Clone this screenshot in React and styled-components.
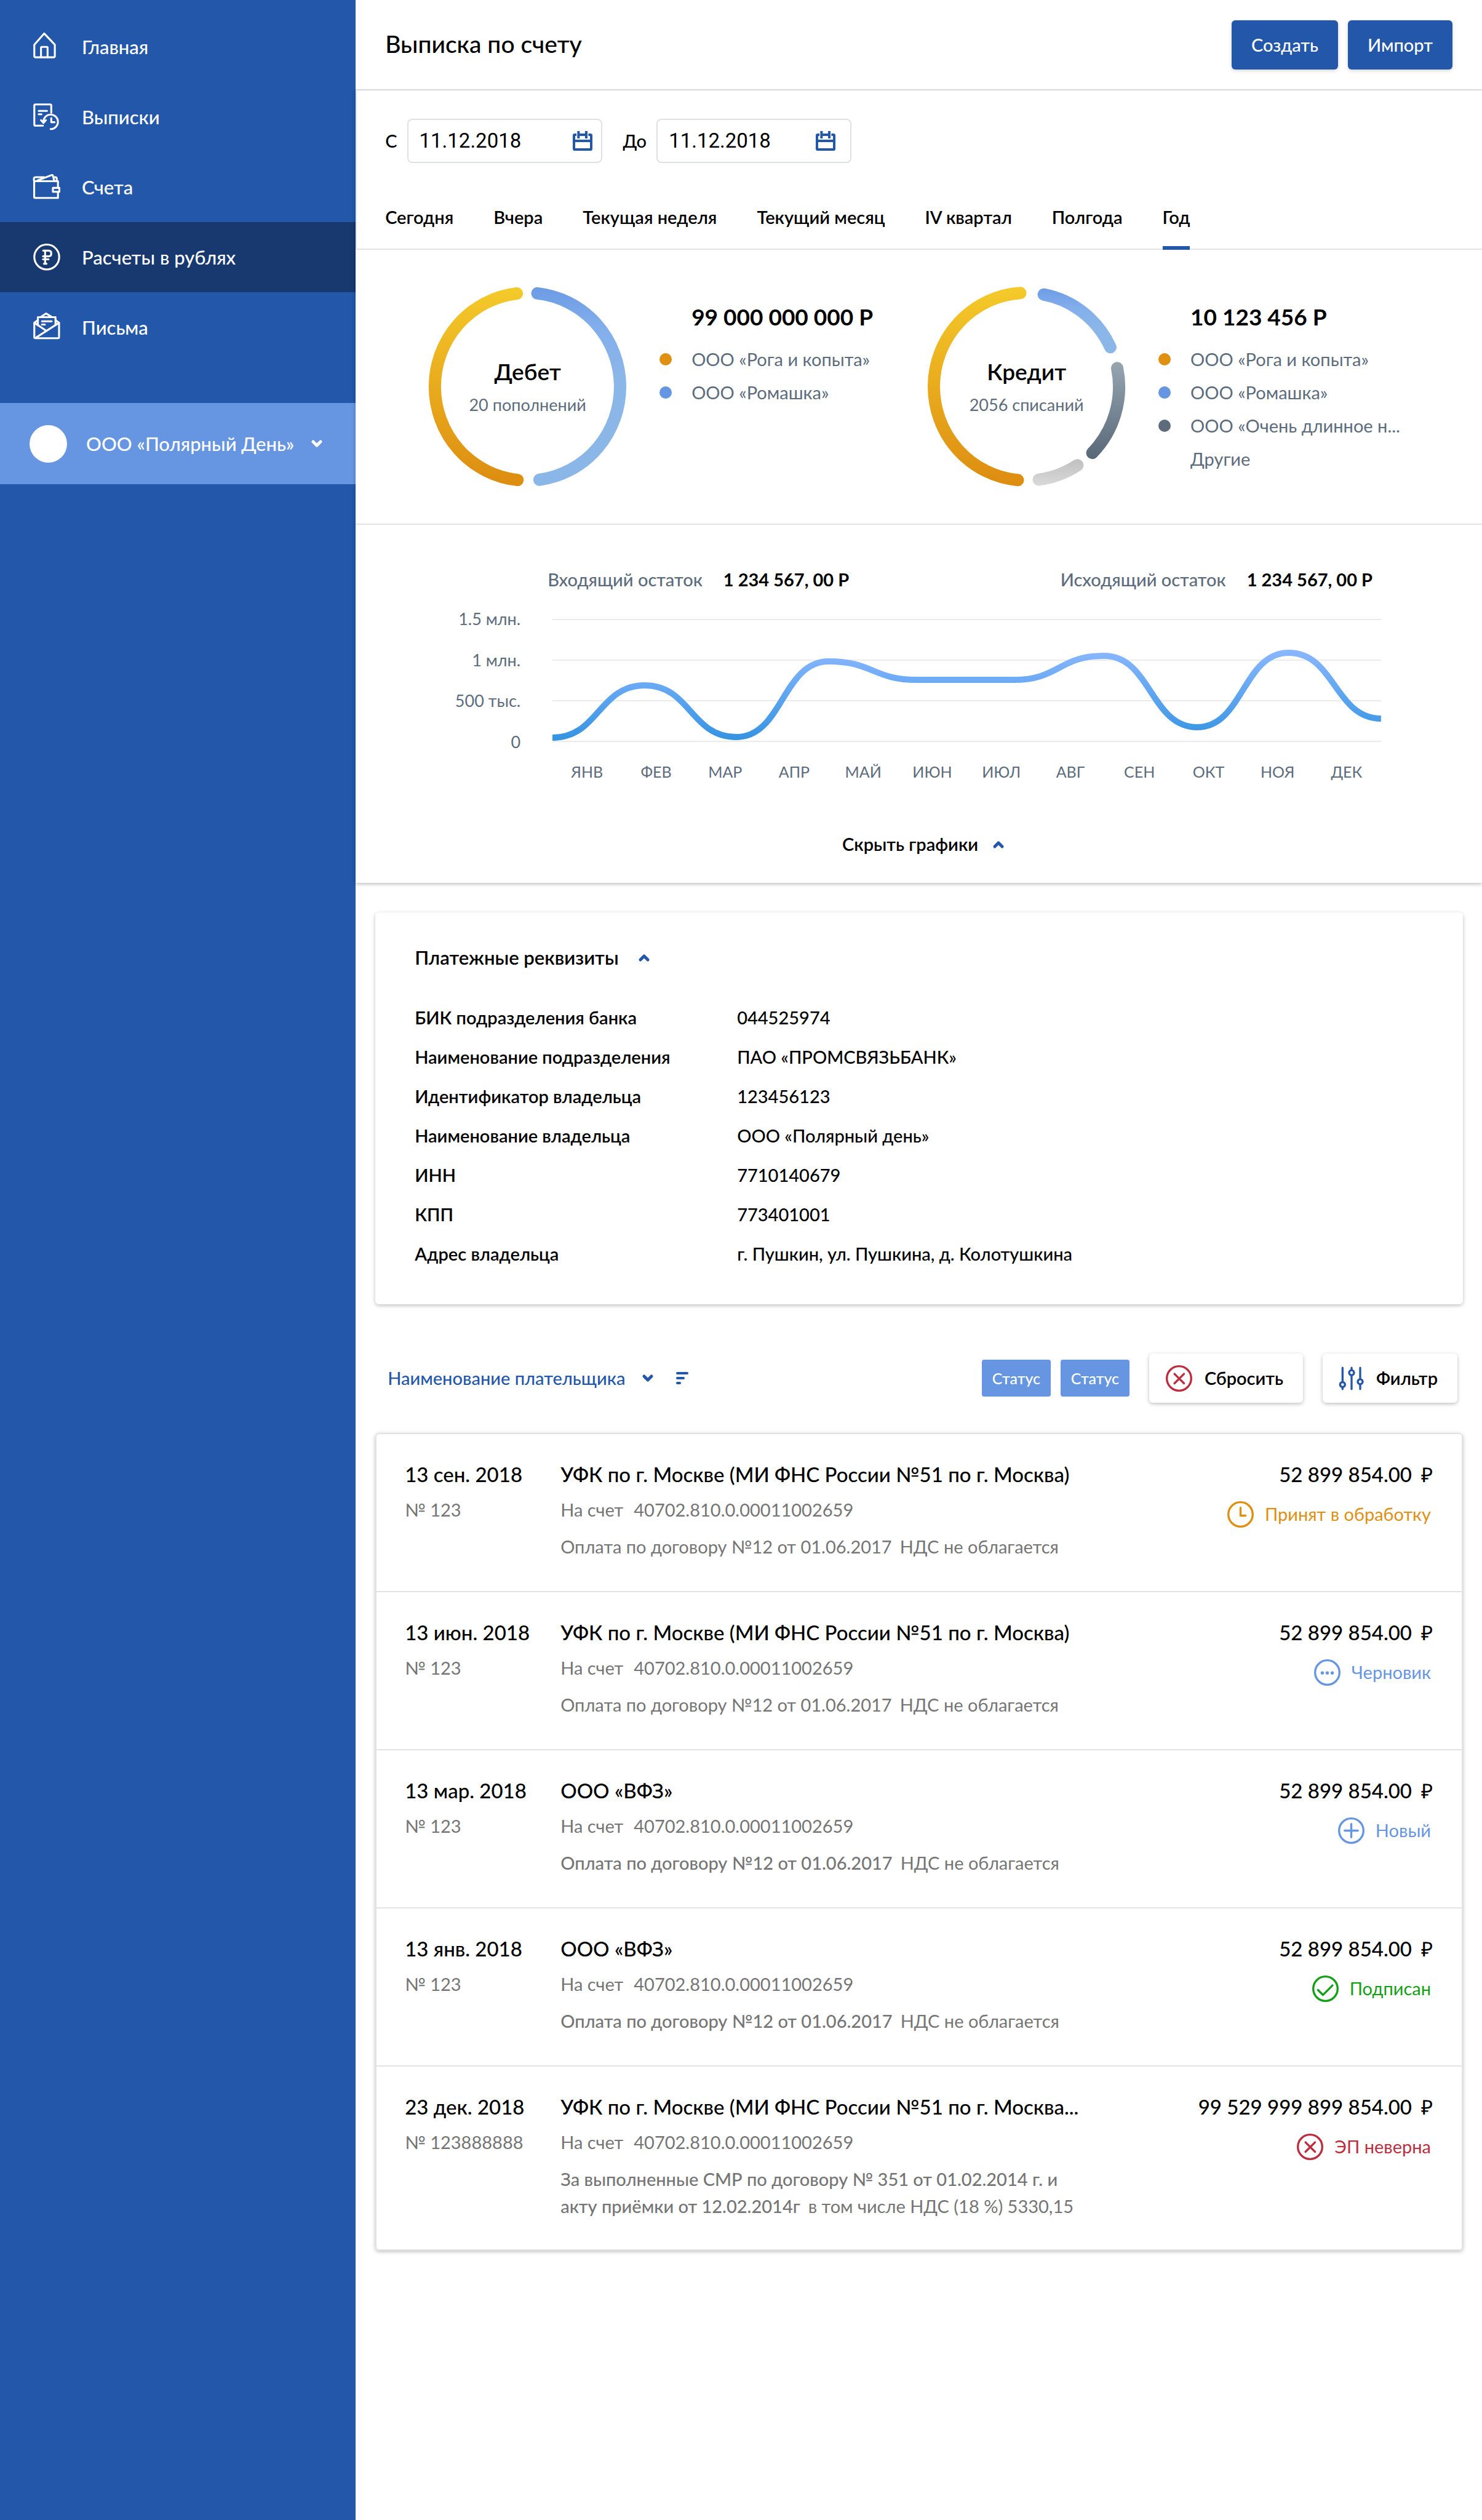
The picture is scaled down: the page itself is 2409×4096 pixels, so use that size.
import React from "react";
import styled, { createGlobalStyle, css } from "styled-components";

const color = {
  blue: "#2357aa",
  navy: "#173970",
  sky: "#6695e2",
  slate: "#5c6c7c",
  grey: "#757575",
  line: "#e3e3e3",
  orange: "#df8f11",
  green: "#14a014",
  red: "#bc2e3e",
};

const shadow = "0 2px 6px rgba(0, 0, 0, 0.26)";

const GlobalStyle = createGlobalStyle`
  *, *::before, *::after { box-sizing: border-box; }
  body {
    margin: 0;
    background: #fff;
    color: #000;
    font-family: Lato, "Open Sans", sans-serif;
    font-size: 29px;
    line-height: 36px;
    font-weight: 500;
  }
  button, input, select { font: inherit; color: inherit; }
  button { cursor: pointer; }
  h1, h2, h3, p, ul, dl, dd, dt { margin: 0; padding: 0; font: inherit; }
  ul { list-style: none; }
`;

/* ---------- icons ---------- */

const Svg = styled.svg`
  display: block;
  flex: none;
  overflow: visible;
  fill: none;
  stroke: currentColor;
  stroke-linecap: round;
  stroke-linejoin: round;
`;

const NavIcon = ({ children }) => (
  <Svg width="44" height="44" viewBox="0 0 198 198" strokeWidth="14" aria-hidden="true">
    {children}
  </Svg>
);

const HomeIcon = () => (
  <NavIcon>
    <path d="M80 2 8 84v84q0 8 8 8h134q8 0 8-8V84z" />
    <path d="M57 176v-70q0-6 6-6h36q6 0 6 6v70" />
  </NavIcon>
);

const StatementIcon = () => (
  <NavIcon>
    <path d="M132 68V16q0-8-8-8H16q-8 0-8 8v139q0 8 8 8h55M40 55h61M40 80h20" />
    <path d="M75 140a53 53 0 1 1 52 48M57 123l18 20 18-20M132 108v30h24" />
  </NavIcon>
);

const WalletIcon = () => (
  <NavIcon>
    <path d="M181 98V56H7v115q0 8 8 8h166v-38M144 105h47v29h-47z" />
    <path d="M5 50V38q0-11 13-11h62M30 52 134 12q8-3 10 4l10 38M155 27h6q11 0 11 11v16" />
  </NavIcon>
);

const RubleIcon = () => (
  <NavIcon>
    <circle cx="99" cy="98" r="91" />
    <path d="M73 51h39q20 0 20 21t-20 21H72M72 115h40M87 51v96M79 147h18" />
  </NavIcon>
);

const MailIcon = () => (
  <NavIcon>
    <path d="M8 66v105q0 8 8 8h165q8 0 8-8V66M34 82V25h129v57M60 20 94-2l36 22" />
    <path d="M34 46 8 66l90 60M163 46l26 20L16 177M64 55h71M64 79h21" />
  </NavIcon>
);

const Chevron = ({ up }) => (
  <Svg width="18" height="11" viewBox="0 0 18 11" strokeWidth="5" aria-hidden="true">
    <path d={up ? "M3 9l6-6 6 6" : "M3 2l6 6 6-6"} />
  </Svg>
);

const CalendarIcon = () => (
  <Svg width="32" height="32" viewBox="0 0 48 48" strokeWidth="6" aria-hidden="true">
    <rect x="3" y="9" width="42" height="36" rx="2" />
    <path d="M3 24h42" strokeLinecap="butt" />
    <path d="M14 0v18M33 0v18" stroke="#fff" strokeWidth="10" strokeLinecap="butt" />
    <path d="M14 0v18M33 0v18M14 9h19" strokeLinecap="butt" />
  </Svg>
);

const SortIcon = () => (
  <Svg width="20" height="20" viewBox="0 0 20 20" strokeWidth="4" aria-hidden="true">
    <path d="M2 2h16M2 10h10M2 18h4" />
  </Svg>
);

const SlidersIcon = () => (
  <Svg width="40" height="39" viewBox="0 0 60 58" strokeWidth="5" aria-hidden="true">
    <path d="M8 3v34M8 52v3M30 3v5M30 23v32M51 3v26M51 45v10" />
    <circle cx="8" cy="44" r="6" />
    <circle cx="30" cy="15" r="6" />
    <circle cx="51" cy="37" r="6" />
  </Svg>
);

const glyphs = {
  clock: <path d="M32 16v19h12" />,
  dots: (
    <g fill="currentColor" stroke="none">
      <circle cx="20" cy="33" r="4" />
      <circle cx="32" cy="33" r="4" />
      <circle cx="44" cy="33" r="4" />
    </g>
  ),
  plus: <path d="M32 16v32M16 32h32" />,
  check: <path d="M14 35l12 12 23-23" />,
  cross: <path d="M21 21l23 23M44 21L21 44" />,
};

const RoundIcon = ({ glyph }) => (
  <Svg width="43" height="43" viewBox="0 0 64 64" strokeWidth="5" aria-hidden="true">
    <circle cx="32" cy="32" r="29.5" />
    {glyphs[glyph]}
  </Svg>
);

/* ---------- shell ---------- */

const Shell = styled.div`
  display: flex;
  min-height: 100vh;
`;

const Sidebar = styled.aside`
  flex: none;
  width: 24%;
  padding-top: 19px;
  background: ${color.blue};
  color: #fff;
  font-size: 31px;
`;

const NavLink = styled.a`
  display: flex;
  align-items: center;
  gap: 35px;
  height: 114px;
  padding: 0 54px;
  color: inherit;
  text-decoration: none;
  background: ${(p) => (p.$active ? color.navy : "transparent")};
`;

const Account = styled.button`
  display: flex;
  align-items: center;
  width: 100%;
  height: 132px;
  margin-top: 66px;
  padding: 0 48px;
  border: 0;
  background: ${color.sky};
`;

const Avatar = styled.span`
  width: 61px;
  height: 61px;
  margin-right: 31px;
  border-radius: 50%;
  background: #fff;
`;

const AccountName = styled.span`
  margin-right: 28px;
`;

const Main = styled.main`
  flex: 1;
  min-width: 0;
`;

const Header = styled.header`
  display: flex;
  align-items: center;
  justify-content: space-between;
  height: 147px;
  padding: 0 48px;
  border-bottom: 2px solid ${color.line};
`;

const Title = styled.h1`
  padding-bottom: 4px;
  font-size: 39px;
  line-height: 48px;
`;

const Actions = styled.div`
  display: flex;
  gap: 16px;
`;

const PrimaryButton = styled.button`
  height: 80px;
  padding: 0 32px;
  border: 0;
  border-radius: 6px;
  background: ${color.blue};
  color: #fff;
  box-shadow: 0 2px 6px rgba(0, 0, 0, 0.16);
`;

/* ---------- overview panel ---------- */

const Overview = styled.section`
  box-shadow: ${shadow};
`;

const Filters = styled.div`
  padding: 46px 46px 0;
  border-left: 2px solid ${color.line};
  border-bottom: 2px solid ${color.line};
`;

const Dates = styled.div`
  display: flex;
  align-items: center;
  gap: 34px;
`;

const DateField = styled.label`
  display: flex;
  align-items: center;
  gap: 16px;
`;

const DateBox = styled.span`
  display: flex;
  align-items: center;
  width: 317px;
  height: 72px;
  padding: 0 ${(p) => p.$inset}px 0 18px;
  border: 2px solid #dfe2e5;
  border-radius: 8px;
  color: ${color.blue};
`;

const DateInput = styled.input`
  flex: 1;
  min-width: 0;
  padding: 0;
  border: 0;
  outline: 0;
  background: none;
  color: #000;
  font: 400 33px/40px Roboto, sans-serif;
`;

const Tabs = styled.div`
  display: flex;
  gap: 65px;
  margin: 70px 0 -2px;
`;

const Tab = styled.button`
  padding: 0 0 29px;
  border: 0;
  border-bottom: 6px solid ${(p) => (p.$active ? color.blue : "transparent")};
  background: none;
  font-weight: 600;
`;

const Shares = styled.div`
  display: grid;
  grid-template-columns: 1fr 1fr;
  padding: 60px 90px 60px 119px;
  border-bottom: 2px solid ${color.line};
`;

const Share = styled.div`
  display: flex;
`;

const Donut = styled.div`
  display: grid;
  flex: none;
  width: 321px;
  height: 325px;
  margin-right: 54px;
  > * { grid-area: 1 / 1; }
`;

const DonutText = styled.div`
  align-self: center;
  text-align: center;
`;

const DonutName = styled.h2`
  font-size: 37px;
  line-height: 44px;
  font-weight: 600;
`;

const DonutCount = styled.p`
  margin-top: 14px;
  font-size: 27px;
  font-weight: 400;
  color: ${color.slate};
`;

const Legend = styled.div`
  padding-top: 27px;
`;

const Total = styled.p`
  margin: 0 0 29px 52px;
  font-size: 37px;
  line-height: 44px;
  font-weight: 700;
`;

const LegendList = styled.ul`
  display: grid;
  gap: 18px;
  font-weight: 400;
  color: ${color.slate};
`;

const LegendItem = styled.li`
  display: flex;
  align-items: center;
  gap: 32px;
  white-space: nowrap;
  &::before {
    content: "";
    width: 20px;
    height: 20px;
    border-radius: 50%;
    background: ${(p) => p.$dot || "transparent"};
  }
`;

const ChartBlock = styled.div`
  display: grid;
  grid-template-columns: 148px 1fr;
  column-gap: 52px;
  padding: 71px 164px 45px 120px;
`;

const Balances = styled.div`
  grid-column: 2;
  display: flex;
  justify-content: space-between;
  margin: 0 14px 46px -8px;
`;

const Balance = styled.p`
  display: flex;
  gap: 34px;
  color: ${color.slate};
  strong { color: #000; font-weight: 700; }
`;

const Scale = styled.ul`
  display: flex;
  flex-direction: column;
  justify-content: space-between;
  margin: -17px 0;
  text-align: right;
  font-size: 27px;
  line-height: 34px;
  font-weight: 400;
  color: ${color.slate};
`;

const Plot = styled.div`
  height: 200px;
  background: repeating-linear-gradient(#ebebeb 0 2px, transparent 2px 66px);
`;

const Months = styled.ul`
  grid-column: 2;
  display: grid;
  grid-template-columns: repeat(12, 1fr);
  margin-top: 32px;
  text-align: center;
  font-size: 25px;
  line-height: 32px;
  font-weight: 400;
  color: ${color.slate};
`;

const HideCharts = styled.button`
  grid-column: 1 / -1;
  display: flex;
  align-items: center;
  justify-self: center;
  gap: 24px;
  margin: 84px 0 0 58px;
  padding: 0;
  border: 0;
  background: none;
  font-weight: 600;
  svg { color: ${color.blue}; }
`;

/* ---------- requisites ---------- */

const Card = styled.section`
  margin: 48px 31px 80px 32px;
  padding: 53px 64px 64px;
  border-radius: 6px;
  box-shadow: ${shadow};
`;

const CardToggle = styled.button`
  display: flex;
  align-items: center;
  gap: 32px;
  margin-bottom: 60px;
  padding: 0;
  border: 0;
  background: none;
  font-size: 31px;
  line-height: 40px;
  font-weight: 600;
  svg { color: ${color.blue}; }
`;

const Requisites = styled.dl`
  display: grid;
  grid-template-columns: 524px 1fr;
  row-gap: 28px;
  dt { font-weight: 600; }
`;

/* ---------- toolbar ---------- */

const Toolbar = styled.div`
  display: flex;
  align-items: center;
  gap: 32px;
  margin-bottom: 49px;
  padding: 0 40px 0 52px;
`;

const Sorting = styled.div`
  display: flex;
  align-items: center;
  gap: 37px;
  margin-right: auto;
  color: ${color.blue};
`;

const PayerSelect = styled.select`
  margin-right: -10px;
  padding: 0;
  border: 0;
  background: none;
  appearance: none;
`;

const Chips = styled.div`
  display: flex;
  gap: 16px;
`;

const Chip = styled.button`
  height: 60px;
  width: 112px;
  padding: 0;
  border: 0;
  border-radius: 4px;
  background: ${color.sky};
  color: #fff;
  font-size: 25px;
`;

const ToolButton = styled.button`
  display: flex;
  align-items: center;
  gap: 20px;
  height: 80px;
  padding: 0 32px 0 27px;
  border: 0;
  border-radius: 6px;
  background: #fff;
  box-shadow: ${shadow};
  font-weight: 600;
  svg { color: ${(p) => p.$tint}; }
`;

/* ---------- operations ---------- */

const Operations = styled.ul`
  margin: 0 31px 48px 32px;
  border: 2px solid ${color.line};
  border-radius: 6px;
  box-shadow: ${shadow};
`;

const Operation = styled.li`
  display: grid;
  grid-template-columns: 253px 1fr auto;
  padding: 45px 47px 50px 46px;
  font-weight: 400;
  color: ${color.grey};
  & + & { border-top: 2px solid ${color.line}; }
  &:last-child { padding-bottom: 48px; }
`;

const headline = css`
  margin-bottom: 20px;
  font-size: 33px;
  line-height: 40px;
  font-weight: 500;
  color: #000;
`;

const Day = styled.h3`
  ${headline}
`;

const Payer = styled.h3`
  ${headline}
`;

const AccountLine = styled.p`
  display: flex;
  gap: 17px;
  margin-bottom: 20px;
`;

const PurposeLine = styled.p`
  display: flex;
  gap: 13px;
  line-height: 44px;
  font-weight: ${(p) => (p.$strong ? 500 : 400)};
`;

const Vat = styled.span`
  font-weight: 400;
`;

const Sum = styled.p`
  ${headline}
  display: flex;
  justify-content: flex-end;
  gap: 15px;
  margin-bottom: 23px;
  span { font-weight: 400; }
`;

const Status = styled.p`
  display: flex;
  align-items: center;
  justify-content: flex-end;
  gap: 18px;
  height: 44px;
  padding-right: 3px;
  color: ${(p) => p.$tone};
`;

/* ---------- data ---------- */

const nav = [
  ["Главная", HomeIcon],
  ["Выписки", StatementIcon],
  ["Счета", WalletIcon],
  ["Расчеты в рублях", RubleIcon],
  ["Письма", MailIcon],
];

const periods = ["Сегодня", "Вчера", "Текущая неделя", "Текущий месяц", "IV квартал", "Полгода", "Год"];

const shares = [
  {
    name: "Дебет",
    count: "20 пополнений",
    total: "99 000 000 000 Р",
    arcs: [
      ["gold", "M214 16.5A225 228 0 0 0 215.7 469.7"],
      ["azure", "M264 16.3A225 228 0 0 1 269 469.1"],
    ],
    legend: [
      ["ООО «Рога и копыта»", color.orange],
      ["ООО «Ромашка»", color.sky],
    ],
  },
  {
    name: "Кредит",
    count: "2056 списаний",
    total: "10 123 456 Р",
    arcs: [
      ["gold", "M225 15.5A225 228 0 0 0 219 470"],
      ["azureShort", "M282 19A225 228 0 0 1 444 147"],
      ["steel", "M460.6 198A225 228 0 0 1 400 404"],
      ["silver", "M364 434A225 228 0 0 1 270 469"],
    ],
    legend: [
      ["ООО «Рога и копыта»", color.orange],
      ["ООО «Ромашка»", color.sky],
      ["ООО «Очень длинное н...", color.slate],
      ["Другие", null],
    ],
  },
];

const gradients = [
  ["gold", 0, 486, [["0", "#f4ca2a"], ["1", "#dd8c10"]]],
  ["azure", 0, 486, [["0", "#6c9be4"], ["0.2", "#82aeec"], ["0.45", "#8bb6e8"]]],
  ["azureShort", 0, 170, [["0", "#6c9be4"], ["0.3", "#82aeec"], ["0.6", "#8bb6e8"]]],
  ["steel", 180, 420, [["0", "#98a6b2"], ["1", "#586878"]]],
  ["silver", 425, 486, [["0", "#c2c2c2"], ["1", "#dadada"]]],
];

const months = ["ЯНВ", "ФЕВ", "МАР", "АПР", "МАЙ", "ИЮН", "ИЮЛ", "АВГ", "СЕН", "ОКТ", "НОЯ", "ДЕК"];

const balancePoints = [
  [0, 193], [150, 108], [299, 192], [449, 69], [593, 99],
  [750, 99], [897, 60], [1048, 176], [1197, 55], [1347, 162],
];

const balancePath = balancePoints
  .map(([x, y], i) => {
    if (i === 0) return `M${x} ${y}`;
    const [px, py] = balancePoints[i - 1];
    const mid = (px + x) / 2;
    return `C${mid} ${py} ${mid} ${y} ${x} ${y}`;
  })
  .join("");

const requisites = [
  ["БИК подразделения банка", "044525974"],
  ["Наименование подразделения", "ПАО «ПРОМСВЯЗЬБАНК»"],
  ["Идентификатор владельца", "123456123"],
  ["Наименование владельца", "ООО «Полярный день»"],
  ["ИНН", "7710140679"],
  ["КПП", "773401001"],
  ["Адрес владельца", "г. Пушкин, ул. Пушкина, д. Колотушкина"],
];

const contract = ["Оплата по договору №12 от 01.06.2017"];
const operations = [
  { day: "13 сен. 2018", no: "№ 123", payer: "УФК по г. Москве (МИ ФНС России №51 по г. Москва)", purpose: contract, vat: "НДС не облагается", sum: "52 899 854.00", status: "Принят в обработку", glyph: "clock", tone: color.orange },
  { day: "13 июн. 2018", no: "№ 123", payer: "УФК по г. Москве (МИ ФНС России №51 по г. Москва)", purpose: contract, vat: "НДС не облагается", sum: "52 899 854.00", status: "Черновик", glyph: "dots", tone: color.sky },
  { day: "13 мар. 2018", no: "№ 123", payer: "ООО «ВФЗ»", purpose: contract, vat: "НДС не облагается", strong: true, sum: "52 899 854.00", status: "Новый", glyph: "plus", tone: color.sky },
  { day: "13 янв. 2018", no: "№ 123", payer: "ООО «ВФЗ»", purpose: contract, vat: "НДС не облагается", strong: true, sum: "52 899 854.00", status: "Подписан", glyph: "check", tone: color.green },
  { day: "23 дек. 2018", no: "№ 123888888", payer: "УФК по г. Москве (МИ ФНС России №51 по г. Москва...", purpose: ["За выполненные СМР по договору № 351 от 01.02.2014 г. и", "акту приёмки от 12.02.2014г"], vat: "в том числе НДС (18 %) 5330,15", strong: true, sum: "99 529 999 899 854.00", status: "ЭП неверна", glyph: "cross", tone: color.red },
];

/* ---------- page ---------- */

const ShareDonut = ({ share }) => (
  <Donut>
    <Svg width="321" height="325" viewBox="0 0 480 486" strokeWidth="30" aria-hidden="true">
      <defs>
        {gradients.map(([id, y1, y2, stops]) => (
          <linearGradient key={id} id={id} gradientUnits="userSpaceOnUse" x1="0" x2="0" y1={y1} y2={y2}>
            {stops.map(([offset, c]) => <stop key={offset} offset={offset} stopColor={c} />)}
          </linearGradient>
        ))}
      </defs>
      {share.arcs.map(([id, d]) => <path key={id} d={d} stroke={`url(#${id})`} />)}
    </Svg>
    <DonutText>
      <DonutName>{share.name}</DonutName>
      <DonutCount>{share.count}</DonutCount>
    </DonutText>
  </Donut>
);

export default function App() {
  return (
    <Shell>
      <GlobalStyle />
      <Sidebar>
        <nav>
          {nav.map(([label, Icon]) => (
            <NavLink key={label} href="#" $active={label === "Расчеты в рублях"}>
              <Icon />
              {label}
            </NavLink>
          ))}
        </nav>
        <Account type="button">
          <Avatar />
          <AccountName>ООО «Полярный День»</AccountName>
          <Chevron />
        </Account>
      </Sidebar>

      <Main>
        <Header>
          <Title>Выписка по счету</Title>
          <Actions>
            <PrimaryButton type="button">Создать</PrimaryButton>
            <PrimaryButton type="button">Импорт</PrimaryButton>
          </Actions>
        </Header>

        <Overview>
          <Filters>
            <Dates>
              <DateField>
                С
                <DateBox $inset={14}>
                  <DateInput defaultValue="11.12.2018" />
                  <CalendarIcon />
                </DateBox>
              </DateField>
              <DateField>
                До
                <DateBox $inset={24}>
                  <DateInput defaultValue="11.12.2018" />
                  <CalendarIcon />
                </DateBox>
              </DateField>
            </Dates>
            <Tabs role="tablist">
              {periods.map((p) => (
                <Tab key={p} type="button" role="tab" $active={p === "Год"} aria-selected={p === "Год"}>
                  {p}
                </Tab>
              ))}
            </Tabs>
          </Filters>

          <Shares>
            {shares.map((share) => (
              <Share key={share.name}>
                <ShareDonut share={share} />
                <Legend>
                  <Total>{share.total}</Total>
                  <LegendList>
                    {share.legend.map(([label, dot]) => (
                      <LegendItem key={label} $dot={dot}>{label}</LegendItem>
                    ))}
                  </LegendList>
                </Legend>
              </Share>
            ))}
          </Shares>

          <ChartBlock>
            <Balances>
              <Balance>Входящий остаток <strong>1 234 567, 00 Р</strong></Balance>
              <Balance>Исходящий остаток <strong>1 234 567, 00 Р</strong></Balance>
            </Balances>
            <Scale>
              <li>1.5 млн.</li>
              <li>1 млн.</li>
              <li>500 тыс.</li>
              <li>0</li>
            </Scale>
            <Plot>
              <Svg width="100%" height="200" viewBox="0 0 1347 200" preserveAspectRatio="none" aria-hidden="true">
                <defs>
                  <linearGradient id="balance" gradientUnits="userSpaceOnUse" x1="0" x2="0" y1="50" y2="198">
                    <stop offset="0" stopColor="#8ab7ff" />
                    <stop offset="1" stopColor="#3493e1" />
                  </linearGradient>
                </defs>
                <path d={balancePath} stroke="url(#balance)" strokeWidth="10" strokeLinecap="butt" />
              </Svg>
            </Plot>
            <Months>{months.map((m) => <li key={m}>{m}</li>)}</Months>
            <HideCharts type="button">Скрыть графики <Chevron up /></HideCharts>
          </ChartBlock>
        </Overview>

        <Card>
          <CardToggle type="button" aria-expanded="true">Платежные реквизиты <Chevron up /></CardToggle>
          <Requisites>
            {requisites.map(([term, value]) => (
              <React.Fragment key={term}>
                <dt>{term}</dt>
                <dd>{value}</dd>
              </React.Fragment>
            ))}
          </Requisites>
        </Card>

        <Toolbar>
          <Sorting>
            <PayerSelect aria-label="Сортировка">
              <option>Наименование плательщика</option>
            </PayerSelect>
            <Chevron />
            <SortIcon />
          </Sorting>
          <Chips>
            <Chip type="button">Статус</Chip>
            <Chip type="button">Статус</Chip>
          </Chips>
          <ToolButton type="button" $tint={color.red}><RoundIcon glyph="cross" />Сбросить</ToolButton>
          <ToolButton type="button" $tint={color.blue}><SlidersIcon />Фильтр</ToolButton>
        </Toolbar>

        <Operations>
          {operations.map((op) => (
            <Operation key={op.day}>
              <div>
                <Day>{op.day}</Day>
                <p>{op.no}</p>
              </div>
              <div>
                <Payer>{op.payer}</Payer>
                <AccountLine><span>На счет</span><span>40702.810.0.00011002659</span></AccountLine>
                {op.purpose.map((text, i) => (
                  <PurposeLine key={text} $strong={op.strong}>
                    <span>{text}</span>
                    {i === op.purpose.length - 1 && <Vat>{op.vat}</Vat>}
                  </PurposeLine>
                ))}
              </div>
              <div>
                <Sum>{op.sum}<span>₽</span></Sum>
                <Status $tone={op.tone}><RoundIcon glyph={op.glyph} />{op.status}</Status>
              </div>
            </Operation>
          ))}
        </Operations>
      </Main>
    </Shell>
  );
}
